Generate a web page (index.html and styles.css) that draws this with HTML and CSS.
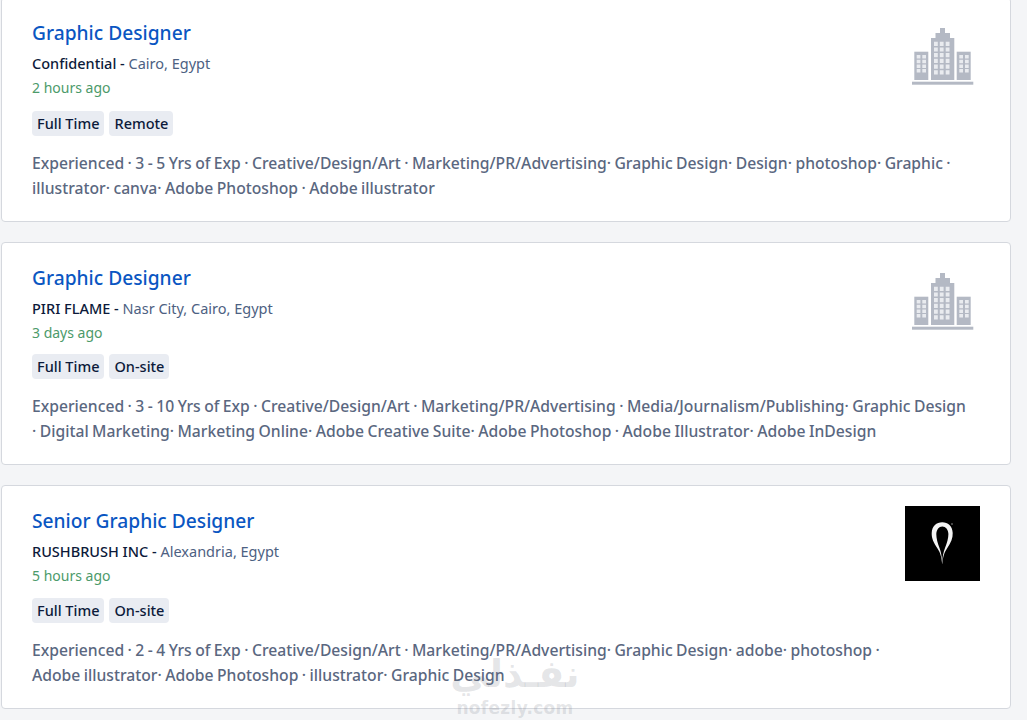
FILE: index.html
```html
<!DOCTYPE html>
<html lang="en">
<head>
    <meta charset="UTF-8">
    <title>Graphic Designer Jobs</title>
    <link rel="stylesheet" href="styles.css">
</head>
<body>
    <div class="job-list">
        <div class="job-card first">
            <div class="job-main">
                <h2 class="job-title">Graphic Designer</h2>
                <div class="job-company"><b>Confidential -</b> <span>Cairo, Egypt</span></div>
                <div class="job-age">2 hours ago</div>
                <div class="job-tags"><span class="tag">Full Time</span><span class="tag">Remote</span></div>
                <p class="job-meta">Experienced · 3 - 5 Yrs of Exp · Creative/Design/Art · Marketing/PR/Advertising· Graphic Design· Design· photoshop· Graphic · illustrator· canva· Adobe Photoshop · Adobe illustrator</p>
            </div>
            <svg class="building" viewBox="0 0 62 58"><use href="#bld"/></svg>
        </div>
        <div class="job-card">
            <div class="job-main">
                <h2 class="job-title">Graphic Designer</h2>
                <div class="job-company"><b>PIRI FLAME -</b> <span>Nasr City, Cairo, Egypt</span></div>
                <div class="job-age">3 days ago</div>
                <div class="job-tags"><span class="tag">Full Time</span><span class="tag">On-site</span></div>
                <p class="job-meta">Experienced · 3 - 10 Yrs of Exp · Creative/Design/Art · Marketing/PR/Advertising · Media/Journalism/Publishing· Graphic Design · Digital Marketing· Marketing Online· Adobe Creative Suite· Adobe Photoshop · Adobe Illustrator· Adobe InDesign</p>
            </div>
            <svg class="building" viewBox="0 0 62 58"><use href="#bld"/></svg>
        </div>
        <div class="job-card last">
            <div class="job-main narrow">
                <h2 class="job-title">Senior Graphic Designer</h2>
                <div class="job-company"><b>RUSHBRUSH INC -</b> <span>Alexandria, Egypt</span></div>
                <div class="job-age">5 hours ago</div>
                <div class="job-tags"><span class="tag">Full Time</span><span class="tag">On-site</span></div>
                <p class="job-meta">Experienced · 2 - 4 Yrs of Exp · Creative/Design/Art · Marketing/PR/Advertising· Graphic Design· adobe· photoshop · Adobe illustrator· Adobe Photoshop · illustrator· Graphic Design</p>
            </div>
            <div class="logo-box">
                <svg viewBox="0 0 75 75" width="75" height="75">
                    <rect width="75" height="75" fill="#000"/>
                    <path d="M37.200 58.500 C36.500 51 35.500 47 32.500 42.500 C28.500 36.500 26.500 32 26.700 27 C27 20 31.500 16.300 37.200 16.300 C43 16.300 47.400 20 47.700 27 C47.900 32 46 36.500 42 42.500 C39 47 38 51 37.200 58.500Z" fill="#f4f4f4"/>
                    <path d="M37.200 56 C36.800 50 36 46 34.500 42 C32.500 37 31.300 32 31.300 28 C31.500 23.500 34 20.500 37.300 20.500 C40.600 20.500 43.300 23.500 43.400 28 C43.400 32 42 37 40 42 C38.500 46 37.600 50 37.200 56Z" fill="#000"/>
                    <circle cx="47" cy="18" r="0.800" fill="#999"/>
                </svg>
            </div>
        </div>
    </div>

    <!-- site watermark on top of the last card -->
    <div class="watermark">
        <div class="wm-ar" lang="ar" dir="rtl">نفـذلي</div>
        <div class="wm-en">nofezly.com</div>
    </div>

    <svg class="defs" width="0" height="0">
        <symbol id="bld" viewBox="0 0 62 58">
            <g fill="#b4b9c4">
                <rect x="28" y="1" width="5" height="6"/>
                <rect x="23.500" y="6" width="14.500" height="5"/>
                <path d="M19 11H42.300V53H19Z"/>
                <path d="M2.300 24.700H16.300V53H2.300Z"/>
                <path d="M44.700 24.700H58.700V53H44.700Z"/>
                <rect y="54.700" width="61.300" height="3"/>
            </g>
            <g fill="#e9ebef">
                <path d="M22 14.700h3.800v4.200h-3.800zM27.800 14.700h3.800v4.200h-3.800zM33.700 14.700h3.800v4.200h-3.800zM22 20.400h3.800v4.200h-3.800zM27.800 20.400h3.800v4.200h-3.800zM33.700 20.400h3.800v4.200h-3.800zM22 26.100h3.800v4.200h-3.800zM27.800 26.100h3.800v4.200h-3.800zM33.700 26.100h3.800v4.200h-3.800zM22 31.800h3.800v4.200h-3.800zM27.800 31.800h3.800v4.200h-3.800zM33.700 31.800h3.800v4.200h-3.800zM22 37.500h3.800v4.200h-3.800zM27.800 37.500h3.800v4.200h-3.800zM33.700 37.500h3.800v4.200h-3.800zM22 43.200h3.800v4.200h-3.800zM27.800 43.200h3.800v4.200h-3.800zM33.700 43.200h3.800v4.200h-3.800z"/>
                <path d="M4.700 28h3.700v3.500h-3.700zM10.300 28h3.700v3.500h-3.700zM4.700 32.700h3.700v3.500h-3.700zM10.300 32.700h3.700v3.500h-3.700zM4.700 37.400h3.700v3.500h-3.700zM10.300 37.400h3.700v3.500h-3.700zM4.700 42.100h3.700v3.500h-3.700zM10.300 42.100h3.700v3.500h-3.700z"/>
                <path d="M47.300 28h3.700v3.500h-3.700zM53 28h3.700v3.500h-3.700zM47.300 32.700h3.700v3.500h-3.700zM53 32.700h3.700v3.500h-3.700zM47.300 37.400h3.700v3.500h-3.700zM53 37.400h3.700v3.500h-3.700zM47.300 42.100h3.700v3.500h-3.700zM53 42.100h3.700v3.500h-3.700z"/>
            </g>
        </symbol>
    </svg>
</body>
</html>
```

FILE: styles.css
```css
html, body {
    height: 720px;
    overflow: hidden;
}
body {
    margin: 0;
    position: relative;
    background-color: #f4f5f7;
    font-family: "Noto Sans", "Open Sans", sans-serif;
}
.job-list {
    display: flex;
    flex-direction: column;
    gap: 20px;
    width: 1010px;
    margin-left: 1px;
}
.job-card {
    display: flex;
    justify-content: space-between;
    background: #fff;
    border: 1px solid #d5d8de;
    border-radius: 4px;
    padding: 22px 30px 20px 30px;
    box-sizing: border-box;
    height: 223px;
}
.job-card.first {
    height: 225px;
    margin-top: -3px;
}
.job-card.last {
    height: 224px;
}
.job-main {
    width: 940px;
    flex: none;
}
.job-main.narrow {
    width: 865px;
}
.job-title {
    margin: 0;
    font-size: 19.2px;
    font-weight: 500;
    line-height: 26px;
    color: #0a56c2;
}
.job-company {
    margin-top: 7px;
    font-size: 14.5px;
    line-height: 20px;
    color: #4d6182;
}
.job-company b {
    font-weight: 500;
    color: #0c1a3a;
}
.job-age {
    margin-top: 5px;
    font-size: 14px;
    line-height: 20px;
    color: #4c9a6a;
}
.job-tags {
    display: flex;
    gap: 5px;
    margin-top: 11px;
}
.first .job-tags {
    margin-top: 13px;
}
.last .job-tags {
    margin-top: 12px;
}
.tag {
    background: #e9ecf2;
    border-radius: 4px;
    padding: 0 5px;
    font-size: 14.5px;
    line-height: 25px;
    font-weight: 500;
    color: #0c1a3a;
}
.job-meta {
    margin: 15px 0 0;
    font-size: 15.7px;
    font-weight: 500;
    word-spacing: -0.6px;
    line-height: 25px;
    color: #5a6780;
}
.building {
    position: absolute;
    left: 912px;
    width: 62px;
    height: 58px;
    margin-top: 7px;
}
.logo-box {
    position: absolute;
    left: 905px;
    margin-top: -2px;
}
.defs {
    position: absolute;
}
.watermark {
    position: absolute;
    left: 440px;
    top: 650px;
    width: 150px;
    text-align: center;
    color: rgba(120, 125, 135, 0.2);
    font-weight: 700;
    font-family: "DejaVu Sans", sans-serif;
}
.wm-ar {
    font-size: 38px;
    line-height: 48px;
}
.wm-en {
    font-size: 17px;
    line-height: 20px;
    letter-spacing: 0.3px;
}
```
